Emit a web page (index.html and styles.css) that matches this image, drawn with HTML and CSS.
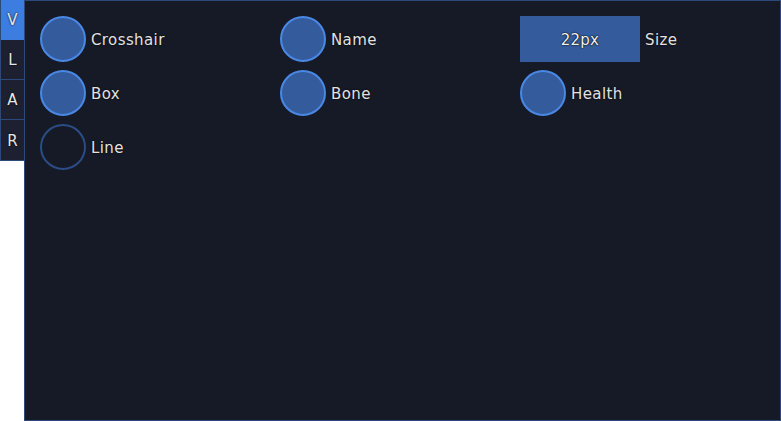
FILE: index.html
```html
<!DOCTYPE html>
<html>
<head>
<meta charset="utf-8">
<link rel="stylesheet" href="styles.css">
</head>
<body>
<div class="app">
  <div class="tabs">
    <div class="tab active">V</div>
    <div class="tab">L</div>
    <div class="tab">A</div>
    <div class="tab">R</div>
  </div>
  <div class="panel">
    <div class="grid">
      <div class="opt"><span class="toggle on"></span><span class="label">Crosshair</span></div>
      <div class="opt"><span class="toggle on"></span><span class="label">Name</span></div>
      <div class="opt"><span class="size">22px</span><span class="label">Size</span></div>
      <div class="opt"><span class="toggle on"></span><span class="label">Box</span></div>
      <div class="opt"><span class="toggle on"></span><span class="label">Bone</span></div>
      <div class="opt"><span class="toggle on"></span><span class="label">Health</span></div>
      <div class="opt"><span class="toggle"></span><span class="label">Line</span></div>
    </div>
  </div>
</div>
</body>
</html>
```
FILE: styles.css
```css
html, body {
  margin: 0;
  padding: 0;
  background: #ffffff;
}
.app {
  display: flex;
  width: 781px;
  height: 421px;
  font-family: "DejaVu Sans", sans-serif;
}
.tabs {
  width: 24px;
  display: flex;
  flex-direction: column;
  align-self: flex-start;
  background: #1c2030;
  border-left: 1px solid #2b4a7a;
  border-bottom: 1px solid #2b4a7a;
  box-sizing: border-box;
}
.tab {
  height: 40px;
  box-sizing: border-box;
  border-bottom: 1px solid #2b4a7a;
  display: flex;
  align-items: center;
  justify-content: center;
  color: #e6e6e6;
  font-size: 15px;
  padding-top: 1px;
  text-shadow: 0 0 2px #000;
}
.tab:last-child {
  border-bottom: none;
}
.tab.active {
  background: #3c7de0;
  border-bottom-color: #3c7de0;
}
.panel {
  flex: 1;
  height: 421px;
  box-sizing: border-box;
  background: #161a26;
  border: 1px solid #2b4a7a;
  padding: 15px 0 0 15px;
}
.grid {
  display: grid;
  grid-template-columns: 240px 240px 240px;
  grid-auto-rows: 46px;
  row-gap: 8px;
}
.opt {
  display: flex;
  align-items: center;
}
.toggle {
  width: 46px;
  height: 46px;
  box-sizing: border-box;
  border-radius: 50%;
  border: 2px solid #2b4c86;
  background: transparent;
}
.toggle.on {
  border: 2px solid #4a88e6;
  background: #345c9c;
}
.label {
  margin-left: 5px;
  padding-top: 2px;
  color: #e2e2e2;
  font-size: 15px;
  letter-spacing: 0.4px;
  text-shadow: 0 0 2px #000;
}
.size {
  width: 120px;
  height: 46px;
  padding-top: 2px;
  box-sizing: border-box;
  background: #345c9c;
  color: #f2f2f2;
  font-size: 15px;
  letter-spacing: 0.2px;
  display: flex;
  align-items: center;
  justify-content: center;
  text-shadow: 0 0 2px #000, 0 0 1px #000;
}
```
